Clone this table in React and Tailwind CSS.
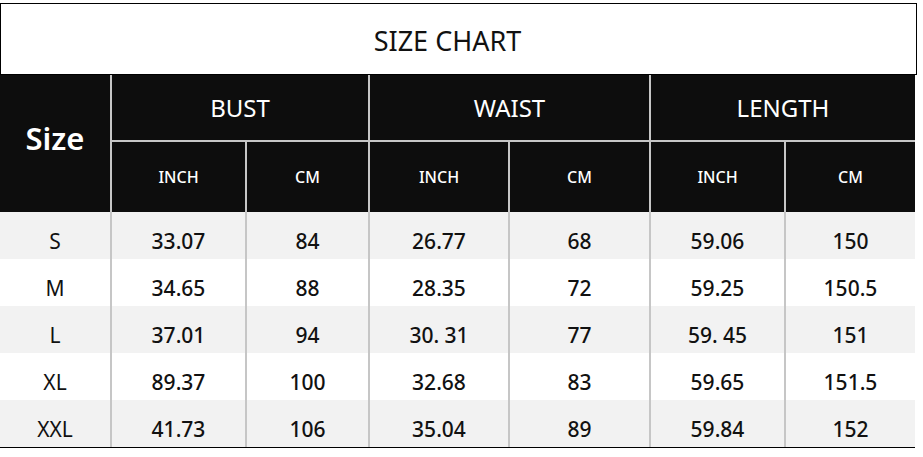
import React from 'react'

const rows = [
  ['S', '33.07', '84', '26.77', '68', '59.06', '150'],
  ['M', '34.65', '88', '28.35', '72', '59.25', '150.5'],
  ['L', '37.01', '94', '30. 31', '77', '59. 45', '151'],
  ['XL', '89.37', '100', '32.68', '83', '59.65', '151.5'],
  ['XXL', '41.73', '106', '35.04', '89', '59.84', '152'],
]

const groups = ['BUST', 'WAIST', 'LENGTH']

function App() {
  return (
    <div className="w-[923px] h-[457px] bg-white pt-[3px] text-[#111]" style={{ fontFamily: '"Noto Sans", "Open Sans", sans-serif' }}>
      {/* Title */}
      <div className="w-[917px] h-[72px] border border-black flex items-center justify-center pr-[22px]">
        <span className="text-[27px] leading-none pt-[2px]">SIZE CHART</span>
      </div>

      {/* Table */}
      <div className="w-[915px] grid grid-cols-[110px_133px_121px_138px_139px_133px_129px] gap-x-[2px] bg-[#c6c6c6] border-b border-black">
        {/* Header */}
        <div className="row-span-2 bg-[#0d0d0d] text-white flex items-center justify-center">
          <span className="text-[31px] font-semibold leading-none pb-[10px]">Size</span>
        </div>
        {groups.map((g) => (
          <div key={g} className="col-span-2 h-[67px] bg-[#0d0d0d] border-b-2 border-[#c6c6c6] text-white flex items-center justify-center">
            <span className="text-[24px] leading-none">{g}</span>
          </div>
        ))}
        {groups.map((g) => (
          <React.Fragment key={g + 'sub'}>
            <div className="h-[70px] bg-[#0d0d0d] text-white flex items-center justify-center">
              <span className="text-[16px] font-medium leading-none">INCH</span>
            </div>
            <div className="h-[70px] bg-[#0d0d0d] text-white flex items-center justify-center">
              <span className="text-[16px] font-medium leading-none">CM</span>
            </div>
          </React.Fragment>
        ))}

        {/* Data */}
        {rows.map((r, i) => (
          <React.Fragment key={r[0]}>
            {r.map((c, j) => (
              <div
                key={j}
                className={
                  'h-[47px] flex items-center justify-center pt-[12px] text-[21px] leading-none ' +
                  (i % 2 === 0 ? 'bg-[#f2f2f2] ' : 'bg-white ') +
                  (j === 0 ? 'font-normal' : 'font-medium')
                }
              >
                {c}
              </div>
            ))}
          </React.Fragment>
        ))}
      </div>
    </div>
  )
}

export default App
